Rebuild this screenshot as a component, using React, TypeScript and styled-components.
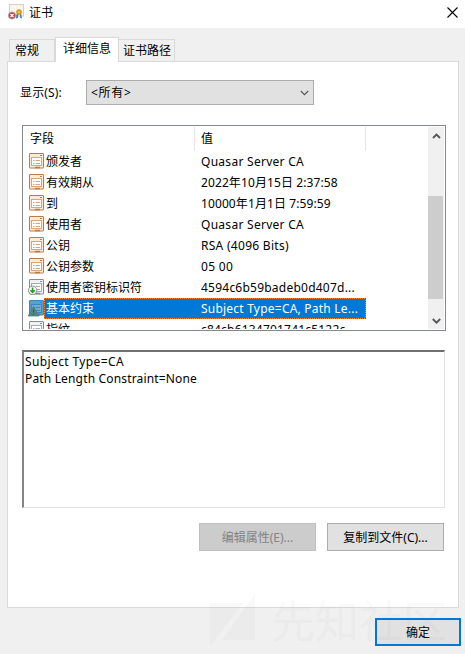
import React from "react";
import styled, { createGlobalStyle, css } from "styled-components";

const Global = createGlobalStyle`
  *{box-sizing:border-box}
  body{margin:0;background:#f0f0f0;color:#000;overflow:hidden;
    font:12px/17px "Noto Sans","Noto Sans CJK SC",sans-serif}
  button{font:inherit;color:inherit;padding:0}
`;

const Dialog = styled.div`width:465px;height:654px;display:flex;flex-direction:column;position:relative;background:#f0f0f0;overflow:hidden;`;
const TitleBar = styled.header`height:28px;flex:none;background:#fff;display:flex;align-items:flex-start;padding:4px 7px 0 8px;`;
const Title = styled.span`margin-left:5px;flex:1;line-height:18px;`;
const Close = styled.svg`margin-top:3px;width:11px;height:11px;`;
const Tabs = styled.nav`height:34px;flex:none;display:flex;align-items:flex-end;padding-left:9px;position:relative;z-index:1;`;
const Tab = styled.div<{ $w: number; $active?: boolean; $last?: boolean }>`
  width:${p => p.$w}px;height:22px;margin-bottom:1px;border:1px solid #d9d9d9;border-bottom:0;
  padding:1px 0 0 5px;white-space:nowrap;line-height:19px;
  ${p => p.$last && css`border-left-width:0;padding-left:4px;`}
  ${p => p.$active && css`height:25px;margin-bottom:0;background:#fff;padding:1px 0 0 7px;`}
`;
const Page = styled.main`width:452px;height:547px;margin:-1px 0 0 7px;flex:none;background:#fff;border:1px solid #d9d9d9;padding:18px 12px 0 14px;`;
const Filter = styled.div`display:flex;height:25px;align-items:center;margin-left:-2px;`;
const Label = styled.span`width:66px;letter-spacing:.15px;`;
const Select = styled.div`width:228px;height:25px;background:#e1e1e1;border:1px solid #adadad;display:flex;align-items:center;justify-content:space-between;padding:0 4px;`;
const List = styled.section`width:424px;height:206px;border:1px solid #828790;margin-top:20px;display:flex;padding:1px;`;
const Table = styled.div`flex:1;height:202px;overflow:hidden;`;
const Head = styled.div`height:24px;display:grid;grid-template-columns:171px 171px;line-height:24px;`;
const HeadCell = styled.div`border-right:1px solid #e5e5e5;padding-left:6px;`;
const Row = styled.div`height:21px;display:flex;padding-left:4px;line-height:21px;`;
const Cells = styled.div<{ $selected?: boolean }>`
  width:322px;height:21px;display:grid;grid-template-columns:155px 1fr;white-space:nowrap;padding:1px 1px 1px 2px;line-height:19px;
  ${p => p.$selected && css`
    color:#fff;
    background:
      repeating-linear-gradient(90deg,#ff8728 0 1px,#0078d7 1px 2px) top/100% 1px no-repeat,
      repeating-linear-gradient(90deg,#ff8728 0 1px,#0078d7 1px 2px) bottom/100% 1px no-repeat,
      repeating-linear-gradient(#ff8728 0 1px,#0078d7 1px 2px) left/1px 100% no-repeat,
      repeating-linear-gradient(#ff8728 0 1px,#0078d7 1px 2px) right/1px 100% no-repeat,
      #0078d7;
  `}
`;
const Text = styled.span<{ $gap?: number }>`letter-spacing:${p => p.$gap ?? 0}px;white-space:nowrap;`;
const IconSvg = styled.svg`width:17px;height:18px;margin:2px -1px 0 0;flex:none;`;
const ScrollBar = styled.div`width:16px;background:#f0f0f0;display:flex;flex-direction:column;align-items:center;justify-content:space-between;padding:6px 0 5px;`;
const Thumb = styled.div`width:15px;height:103px;background:#cdcdcd;margin:37px 1px 0 0;`;
const Details = styled.div`width:423px;height:158px;border:1px solid #e3e3e3;border-top:2px solid #707070;border-left:2px solid #858585;margin-top:19px;padding:1px 0 0 1px;`;
const Line = styled.div`height:17px;`;
const Actions = styled.div`display:flex;gap:11px;justify-content:flex-end;margin:15px 2px 0 0;`;
const Button = styled.button<{ $primary?: boolean }>`
  width:117px;height:28px;background:#e1e1e1;border:1px solid #adadad;
  &:disabled{background:#ccc;border-color:#bfbfbf;color:#838383}
  ${p => p.$primary && css`width:86px;border:2px solid #0078d7;`}
`;
const Footer = styled.footer`display:flex;justify-content:flex-end;padding:10px 4px 0 0;`;
const Watermark = styled.div`position:absolute;left:209px;top:594px;display:flex;align-items:center;gap:14px;color:#808080;opacity:.04;font-size:44px;line-height:54px;pointer-events:none;white-space:nowrap;z-index:3;`;

type Kind = "field" | "extension" | "critical" | "property";

function FieldIcon({ kind }: { kind: Kind }) {
  const c = kind === "field" ? "#b77b4c" : kind === "critical" ? "#3d85b8" : "#858b91";
  const inner = kind === "field" ? "#d5a67c" : kind === "critical" ? "#3d87ba" : "#a8adb2";
  const bg = kind === "field" ? "#ffebd5" : kind === "critical" ? "#5b9fd0" : "#f0f1f3";
  const pane = kind === "critical" ? "#70acd5" : "#fff";
  return (
    <IconSvg viewBox="0 0 17 18">
      <rect x="1.5" y=".5" width="14" height="14.5" rx=".4" fill={bg} stroke={c} />
      <path d="M12 2.5H14" stroke={c} />
      <rect x="3.5" y="4.5" width="10" height="8" fill={pane} stroke={inner} />
      <path d="M5 7.5H6.5M7.5 7.5H12M5 10.5H6.5M7.5 10.5H12" fill="none" stroke={inner} />
      <path d="M7 14.5H12" stroke={c} strokeWidth="1.5" />
      {kind === "extension" && <g><circle cx="4.6" cy="11.3" r="4.2" fill="#fff" stroke="#777" strokeWidth=".8" /><path d="M4.6 8.5V13M2.4 11.2 4.6 13.4 6.8 11.2" stroke="#20a020" strokeWidth="1.6" fill="none" /></g>}
      {kind === "critical" && <g><path d="M5.5 6.5 11 16H.3Z" fill="#4e8a83" stroke="#407f86" strokeWidth=".8" /><path d="M5.6 9.5V12.7M5.6 13.8V15" stroke="#24566f" /></g>}
    </IconSvg>
  );
}

function CertificateIcon() {
  return (
    <svg width="16" height="16" viewBox="0 0 16 16">
      <rect x="1.5" y=".5" width="14" height="11.5" fill="#f7f5ee" stroke="#d5d0c3" />
      <path d="M8.5 10 8 14.5 9.8 14 10.5 10ZM12 10 12.3 14 14 14.5 13 9" fill="#2d75d0" />
      <circle cx="11" cy="8" r="2.8" fill="#d79b16" /><circle cx="11" cy="8" r="1" fill="#f4cf59" />
      <circle cx="4" cy="11.5" r="3.6" fill="#c43b3e" stroke="#a6a6a6" strokeWidth=".8" />
      <path d="m2.5 10 3 3m0-3-3 3" stroke="#fff" strokeWidth="1.2" />
    </svg>
  );
}

const Chevron = ({ up, bold }: { up?: boolean; bold?: boolean }) => (
  <svg width="9" height="6" viewBox="0 0 9 6"><path d={up ? "M1 5 4.5 1.5 8 5" : "M.8 1 4.5 4.7 8.2 1"} fill="none" stroke="#555" strokeWidth={bold ? 1.8 : 1.1} /></svg>
);

const rows: { name: string; value: string; kind: Kind; gap: number; selected?: boolean }[] = [
  { name: "颁发者", value: "Quasar Server CA", kind: "field", gap: 0.28 },
  { name: "有效期从", value: "2022年10月15日 2:37:58", kind: "field", gap: 0.1 },
  { name: "到", value: "10000年1月1日 7:59:59", kind: "field", gap: 0.1 },
  { name: "使用者", value: "Quasar Server CA", kind: "field", gap: 0.28 },
  { name: "公钥", value: "RSA (4096 Bits)", kind: "field", gap: 0.28 },
  { name: "公钥参数", value: "05 00", kind: "field", gap: 0.3 },
  { name: "使用者密钥标识符", value: "4594c6b59badeb0d407d...", kind: "extension", gap: 0.23 },
  { name: "基本约束", value: "Subject Type=CA, Path Le...", kind: "critical", gap: 0.22, selected: true },
  { name: "指纹", value: "c84cb6134701741c5122c...", kind: "property", gap: 0.2 },
];

export default function App() {
  return (
    <>
      <Global />
      <Dialog>
        <TitleBar>
          <CertificateIcon /><Title>证书</Title>
          <Close viewBox="0 0 11 11"><path d="m.5.5 10 10m0-10-10 10" stroke="#000" strokeWidth="1.1" /></Close>
        </TitleBar>
        <Tabs><Tab $w={46}>常规</Tab><Tab $w={64} $active>详细信息</Tab><Tab $w={56} $last>证书路径</Tab></Tabs>
        <Page>
          <Filter><Label>显示(S):</Label><Select><Text $gap={0.7}>&lt;所有&gt;</Text><Chevron /></Select></Filter>
          <List>
            <Table>
              <Head><HeadCell>字段</HeadCell><HeadCell>值</HeadCell></Head>
              {rows.map((r, i) => (
                <Row key={i}><FieldIcon kind={r.kind} /><Cells $selected={r.selected}><Text>{r.name}</Text><Text $gap={r.gap}>{r.value}</Text></Cells></Row>
              ))}
            </Table>
            <ScrollBar><Chevron up bold /><Thumb /><Chevron bold /></ScrollBar>
          </List>
          <Details><Line><Text $gap={0.38}>Subject Type=CA</Text></Line><Line><Text $gap={0.16}>Path Length Constraint=None</Text></Line></Details>
          <Actions><Button disabled>编辑属性(E)...</Button><Button>复制到文件(C)...</Button></Actions>
        </Page>
        <Footer><Button $primary>确定</Button></Footer>
        <Watermark><svg width="48" height="54" viewBox="0 0 48 54"><path d="M1 9H34L1 52ZM46 0V46H13Z" fill="currentColor" /></svg><span>先知社区</span></Watermark>
      </Dialog>
    </>
  );
}
